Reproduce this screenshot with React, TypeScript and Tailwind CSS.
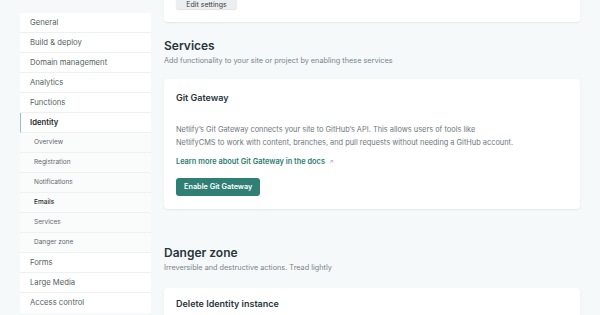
import React from "react";

const top = ["General", "Build & deploy", "Domain management", "Analytics", "Functions"];
const subs = ["Overview", "Registration", "Notifications", "Emails", "Services", "Danger zone"];
const bottom = ["Forms", "Large Media", "Access control"];

export default function App() {
  return (
    <div
      className="w-[600px] h-[315px] overflow-hidden bg-[#f5f9fa] text-[#2e3a40] flex items-start gap-[13px] pl-[20px]"
      style={{ fontFamily: "Inter, 'Noto Sans', sans-serif" }}
    >
      <nav className="w-[131px] shrink-0 mt-[13px] bg-white rounded-[2px] flex flex-col">
        {top.map((t) => (
          <div key={t} className="h-[20px] shrink-0 flex items-center pl-[10px] text-[7.7px] text-[#555f63] border-b border-[#eef1f2]">
            {t}
          </div>
        ))}
        <div className="h-[20px] shrink-0 flex items-center pl-[9px] text-[7.7px] font-semibold text-[#1f2a2f] border-b border-[#eef1f2] border-l-[1px] border-l-[#9cc2bd]">
          Identity
        </div>
        {subs.map((t) => (
          <div
            key={t}
            className={`h-[20px] shrink-0 flex items-center pl-[14px] text-[6.5px] bg-[#fafbfb] border-b border-[#eef1f2] ${t === "Emails" ? "text-[#1f2a2f] font-medium" : "text-[#5d676b]"}`}
          >
            {t}
          </div>
        ))}
        {bottom.map((t) => (
          <div key={t} className="h-[20px] shrink-0 flex items-center pl-[10px] text-[7.7px] text-[#555f63] border-b border-[#eef1f2] last:border-b-0">
            {t}
          </div>
        ))}
      </nav>

      <main className="w-[416px] shrink-0 flex flex-col">
        <div className="h-[23px] shrink-0 -mt-[1px] bg-white rounded-b-[4px] shadow-[0_1px_2px_rgba(0,0,0,0.08)] pl-[12px]">
          <div className="w-[61px] h-[10px] bg-[#eceeef] rounded-b-[3px] shadow-[0_1px_1px_rgba(0,0,0,0.12)] flex items-end justify-center text-[7px] text-[#333d42] leading-none overflow-hidden">
            <span className="mb-[1px]">Edit settings</span>
          </div>
        </div>

        <h2 className="shrink-0 mt-[16px] text-[12px] font-semibold text-[#2a363c] leading-[16px]">Services</h2>
        <p className="shrink-0 mt-[2px] text-[7.3px] text-[#7b8488] leading-[10px]">
          Add functionality to your site or project by enabling these services
        </p>

        <section className="shrink-0 mt-[13px] h-[130px] bg-white rounded-[4px] shadow-[0_1px_2px_rgba(0,0,0,0.08)] px-[12px] pt-[13px]">
          <h3 className="text-[9px] font-semibold text-[#2a363c] leading-[12px]">Git Gateway</h3>
          <p className="mt-[19px] text-[7.4px] text-[#6e777b] leading-[13px]">
            Netlify’s Git Gateway connects your site to GitHub’s API. This allows users of tools like
            <br />
            NetlifyCMS to work with content, branches, and pull requests without needing a GitHub account.
          </p>
          <a className="mt-[8px] flex items-center gap-[4px] text-[7.4px] font-semibold text-[#2f7d72] leading-[10px]">
            Learn more about Git Gateway in the docs
            <span className="text-[6px] text-[#a6aeb1] font-normal">↗</span>
          </a>
          <button className="mt-[11px] h-[18px] px-[8px] rounded-[3px] bg-[#2f7f75] text-white text-[7.3px] font-semibold leading-none">
            Enable Git Gateway
          </button>
        </section>

        <h2 className="shrink-0 mt-[36px] text-[12px] font-semibold text-[#2a363c] leading-[16px]">Danger zone</h2>
        <p className="shrink-0 mt-[2px] text-[7.3px] text-[#7b8488] leading-[10px]">Irreversible and destructive actions. Tread lightly</p>

        <section className="shrink-0 mt-[15px] h-[60px] bg-white rounded-[4px] shadow-[0_1px_2px_rgba(0,0,0,0.08)] px-[12px] pt-[10px]">
          <h3 className="text-[9px] font-semibold text-[#2a363c] leading-[12px]">Delete Identity instance</h3>
        </section>
      </main>
    </div>
  );
}
